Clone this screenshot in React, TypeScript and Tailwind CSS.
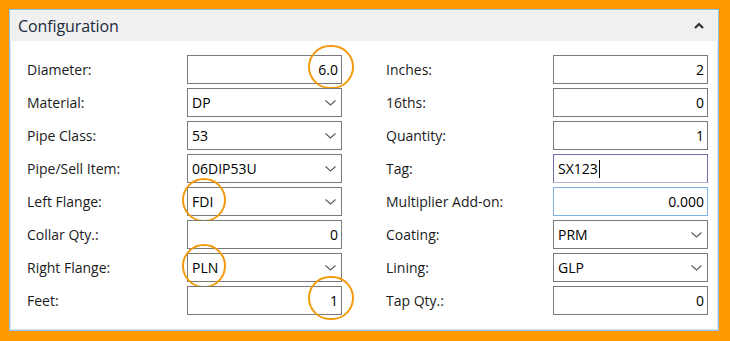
import type { ReactNode } from "react";

type Field = {
  label: string;
  value: string;
  kind: "text" | "select";
  align?: "left" | "right";
  tone?: "focus" | "hover";
  circle?: "left" | "right";
  caret?: boolean;
};

const leftFields: Field[] = [
  { label: "Diameter:", value: "6.0", kind: "text", align: "right", circle: "right" },
  { label: "Material:", value: "DP", kind: "select" },
  { label: "Pipe Class:", value: "53", kind: "select" },
  { label: "Pipe/Sell Item:", value: "06DIP53U", kind: "select" },
  { label: "Left Flange:", value: "FDI", kind: "select", circle: "left" },
  { label: "Collar Qty.:", value: "0", kind: "text", align: "right" },
  { label: "Right Flange:", value: "PLN", kind: "select", circle: "left" },
  { label: "Feet:", value: "1", kind: "text", align: "right", circle: "right" },
];

const rightFields: Field[] = [
  { label: "Inches:", value: "2", kind: "text", align: "right" },
  { label: "16ths:", value: "0", kind: "text", align: "right" },
  { label: "Quantity:", value: "1", kind: "text", align: "right" },
  { label: "Tag:", value: "SX123", kind: "text", align: "left", tone: "focus", caret: true },
  { label: "Multiplier Add-on:", value: "0.000", kind: "text", align: "right", tone: "hover" },
  { label: "Coating:", value: "PRM", kind: "select" },
  { label: "Lining:", value: "GLP", kind: "select" },
  { label: "Tap Qty.:", value: "0", kind: "text", align: "right" },
];

function Chevron() {
  return (
    <svg width="11" height="6" viewBox="0 0 11 6" className="shrink-0">
      <polyline points="0.5,0.5 5.5,5 10.5,0.5" fill="none" stroke="#5a5a5a" strokeWidth="1.1" />
    </svg>
  );
}

function Ring({ side }: { side: "left" | "right" }) {
  // annotation rings drawn over the fields
  return (
    <div
      className={
        side === "right"
          ? "absolute -top-[10px] right-[-12px] w-[46px] h-[44px] rounded-full border-[2.5px] border-[#f39a0c] pointer-events-none"
          : "absolute -top-[9px] left-[-5px] w-[44px] h-[44px] rounded-full border-[2.5px] border-[#f39a0c] pointer-events-none"
      }
    />
  );
}

function Box({ f }: { f: Field }) {
  const border =
    f.tone === "focus"
      ? "border-[#736fae] border-b-[#b5b2d6]"
      : f.tone === "hover"
      ? "border-[#7fb2e5]"
      : "border-[#7a7a7a]";
  let inner: ReactNode;
  if (f.kind === "select") {
    inner = (
      <>
        <span className="flex-1">{f.value}</span>
        <Chevron />
      </>
    );
  } else if (f.align === "right") {
    inner = <span className="flex-1 text-right">{f.value}</span>;
  } else {
    inner = (
      <span className="flex-1 flex items-center">
        {f.value}
        {f.caret && <span className="inline-block w-px h-[18px] bg-black ml-[1px]" />}
      </span>
    );
  }
  return (
    <div className="relative w-[155px] h-[29px]">
      <div
        className={`h-full flex items-center bg-white border ${border} ${
          f.kind === "select" ? "pl-[4px] pr-[5px]" : "pl-[4px] pr-[3px]"
        } text-[14px] text-black`}
      >
        {inner}
      </div>
      {f.circle && <Ring side={f.circle} />}
    </div>
  );
}

function Column({ fields, labelW }: { fields: Field[]; labelW: string }) {
  return (
    <div className="flex flex-col gap-[4px]">
      {fields.map((f) => (
        <div key={f.label} className="flex items-center h-[29px]">
          <div className={`${labelW} text-[14px] text-[#1b1b1b]`}>{f.label}</div>
          <Box f={f} />
        </div>
      ))}
    </div>
  );
}

export default function App() {
  return (
    <div
      className="w-[730px] h-[341px] bg-[#ff9a00] pt-[9px] pl-[9px] overflow-hidden"
      style={{ fontFamily: '"Open Sans", "Noto Sans", sans-serif' }}
    >
      <div className="w-[710px] h-[322px] bg-white border border-[#93bdec] ring-1 ring-inset ring-[#d2e4f7] flex flex-col">
        <div className="h-[31px] bg-[#f0f0f0] flex items-center justify-between pl-[8px] pr-[14px]">
          <span className="text-[16px] text-[#1d2a40] tracking-[-0.1px]">Configuration</span>
          <svg width="10" height="7" viewBox="0 0 10 7">
            <polyline points="1,6 5,2 9,6" fill="none" stroke="#333" strokeWidth="2.2" />
          </svg>
        </div>
        <div className="flex gap-x-[44px] pt-[14px] pl-[17px]">
          <Column fields={leftFields} labelW="w-[160px]" />
          <Column fields={rightFields} labelW="w-[167px]" />
        </div>
      </div>
    </div>
  );
}
